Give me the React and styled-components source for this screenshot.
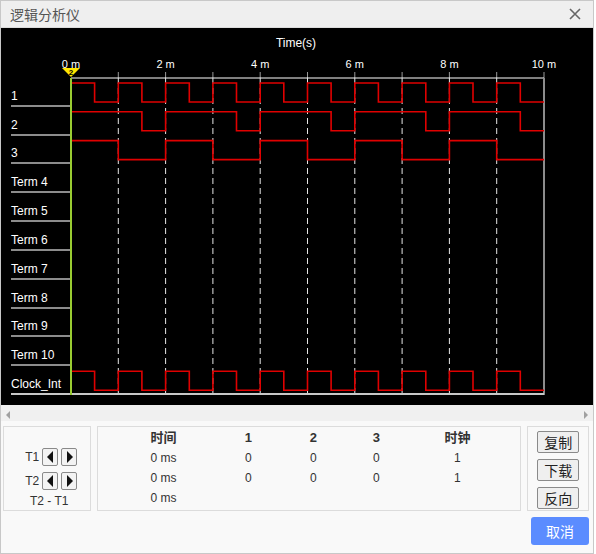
import React from "react";
import styled, { createGlobalStyle } from "styled-components";

const GlobalStyle = createGlobalStyle`
  html, body {
    margin: 0;
    padding: 0;
    background: #ffffff;
    font-family: "Liberation Sans", Arial, "Noto Sans CJK SC", sans-serif;
  }
`;

const Dialog = styled.div`
  width: 592px;
  height: 552px;
  border: 1px solid #c8c8c8;
  display: flex;
  flex-direction: column;
  background: #f9f9f9;
`;

const TitleBar = styled.div`
  height: 26px;
  display: flex;
  align-items: center;
  justify-content: space-between;
  padding: 0 10px 0 9px;
  background: #efefef;
  border-bottom: 1px solid #dcdcdc;
`;

const TitleText = styled.span`
  font-size: 14px;
  color: #555;
  font-family: "Noto Sans CJK SC", sans-serif;
`;

const CloseIcon = styled.svg`
  width: 12px;
  height: 12px;
  margin-right: 2px;
`;

const Canvas = styled.div`
  background: #000;
  height: 377px;
  display: flex;
  flex-direction: column;
`;

const TimeTitle = styled.div`
  height: 28px;
  line-height: 30px;
  text-align: center;
  color: #fff;
  font-size: 12px;
  padding-right: 2px;
`;

const PlotRow = styled.div`
  display: flex;
  flex: 1;
`;

const LabelColumn = styled.div`
  width: 60px;
  margin-left: 10px;
  padding-top: 22px;
  display: flex;
  flex-direction: column;
`;

const RowLabel = styled.div`
  height: 28.82px;
  box-sizing: border-box;
  border-bottom: 2px solid ${(p) => (p.last ? "#c8c8c8" : "#8c8c8c")};
  color: #fff;
  font-size: 12px;
  display: flex;
  align-items: flex-end;
  padding-bottom: 2px;
`;

const Plot = styled.svg`
  overflow: visible;
  display: block;
`;

const ScrollBar = styled.div`
  height: 16px;
  background: #f0f0f0;
  display: flex;
  align-items: center;
  justify-content: space-between;
  padding: 4px 5px 0 5px;
  box-sizing: border-box;
`;

const ScrollArrow = styled.span`
  width: 0;
  height: 0;
  border-top: 4px solid transparent;
  border-bottom: 4px solid transparent;
  ${(p) =>
    p.dir === "left"
      ? "border-right: 4px solid #a0a0a0;"
      : "border-left: 4px solid #a0a0a0;"}
`;

const Panel = styled.div`
  flex: 1;
  display: flex;
  flex-direction: column;
  padding: 5px 4px 0 2px;
`;

const BoxRow = styled.div`
  display: flex;
  gap: 6px;
  height: 85px;
`;

const Box = styled.div`
  width: ${(p) => p.w}px;
  box-sizing: border-box;
  border: 1px solid #dcdcdc;
  background: #f9f9f9;
`;

const CursorBox = styled(Box)`
  display: flex;
  flex-direction: column;
  align-items: center;
  padding-top: 21px;
  gap: 6px;
`;

const CursorRow = styled.div`
  display: flex;
  align-items: center;
  gap: 3px;
  font-size: 12px;
  color: #333;
  margin-left: 8px;
`;

const ArrowButton = styled.button`
  width: 16px;
  height: 18px;
  padding: 0;
  margin: 0;
  border: 1px solid #8a8a8a;
  border-radius: 2px;
  background: #f3f3f3;
  display: flex;
  align-items: center;
  justify-content: center;
`;

const Tri = styled.span`
  width: 0;
  height: 0;
  border-top: 6px solid transparent;
  border-bottom: 6px solid transparent;
  ${(p) =>
    p.dir === "left"
      ? "border-right: 6px solid #111; margin-right: 1px;"
      : "border-left: 6px solid #111; margin-left: 1px;"}
`;

const DiffLabel = styled.div`
  font-size: 12px;
  color: #333;
  margin-top: -2px;
  margin-left: 4px;
`;

const DataTable = styled(Box)`
  display: grid;
  grid-template-columns: 130px 40px 90px 36px 126px;
  grid-auto-rows: 20px;
  padding-top: 1px;
  align-content: start;
`;

const Cell = styled.div`
  text-align: center;
  line-height: 20px;
  font-size: ${(p) => (p.head ? "13px" : "12px")};
  font-weight: ${(p) => (p.head ? "bold" : "normal")};
  color: #333;
  font-family: "Liberation Sans", Arial, "Noto Sans CJK SC", sans-serif;
`;

const ActionBox = styled(Box)`
  display: flex;
  flex-direction: column;
  align-items: center;
  padding-top: 4px;
  gap: 6px;
`;

const ActionButton = styled.button`
  width: 42px;
  height: 22px;
  padding: 0;
  border: 1px solid #8a8a8a;
  border-radius: 2px;
  background: #efefef;
  color: #222;
  font-size: 14px;
  font-family: "Noto Sans CJK SC", sans-serif;
  line-height: 20px;
`;

const Footer = styled.div`
  display: flex;
  justify-content: flex-end;
  padding-top: 6px;
`;

const CancelButton = styled.button`
  width: 58px;
  height: 28px;
  border: none;
  border-radius: 3px;
  background: #5b8cff;
  color: #fff;
  font-size: 14px;
  font-family: "Noto Sans CJK SC", sans-serif;
`;

const labels = [
  "1",
  "2",
  "3",
  "Term 4",
  "Term 5",
  "Term 6",
  "Term 7",
  "Term 8",
  "Term 9",
  "Term 10",
  "Clock_Int",
];

const STEP = 47.3;
const TOP = 22;
const ROW = 28.82;
const BOTTOM = TOP + ROW * 11;

// segments: [start, end, high] in tick units
function buildPath(row, segs) {
  const hi = TOP + row * ROW + 5;
  const lo = TOP + row * ROW + 24;
  let d = "";
  segs.forEach(([a, b, h], i) => {
    const y = h ? hi : lo;
    d += `${i === 0 ? "M" : "L"}${(a * STEP).toFixed(1)},${y} L${(b * STEP).toFixed(1)},${y} `;
  });
  return d;
}

const fast = [];
const mid = [];
const slow = [];
for (let k = 0; k < 10; k++) {
  fast.push([k, k + 0.5, 1], [k + 0.5, k + 1, 0]);
  slow.push([k, k + 1, k % 2 === 0 ? 1 : 0]);
}
for (let k = 0; k < 10; k += 2) {
  mid.push([k, k + 1.5, 1], [k + 1.5, k + 2, 0]);
}

const waves = [
  buildPath(0, fast),
  buildPath(1, mid),
  buildPath(2, slow),
  buildPath(10, fast),
];

const ticks = [0, 1, 2, 3, 4, 5, 6, 7, 8, 9, 10];

const tableRows = [
  ["时间", "1", "2", "3", "时钟"],
  ["0 ms", "0", "0", "0", "1"],
  ["0 ms", "0", "0", "0", "1"],
  ["0 ms", "", "", "", ""],
];

function Chart() {
  return (
    <Plot width="522" height="349">
      {ticks.map((t) =>
        t % 2 === 0 ? (
          <text
            key={"l" + t}
            x={t * STEP}
            y="12"
            fill="#fff"
            fontSize="11"
            textAnchor="middle"
            fontFamily="Liberation Sans, Arial, sans-serif"
          >
            {t} m
          </text>
        ) : null
      )}
      {ticks.slice(1).map((t) => (
        <line
          key={"t" + t}
          x1={t * STEP}
          x2={t * STEP}
          y1="16"
          y2={TOP}
          stroke="#9a9a9a"
          strokeWidth="1"
        />
      ))}
      <line x1="0" x2={10 * STEP} y1={TOP} y2={TOP} stroke="#fff" strokeWidth="1" />
      {ticks.slice(1, 10).map((t) => (
        <line
          key={"d" + t}
          x1={t * STEP}
          x2={t * STEP}
          y1={TOP}
          y2={BOTTOM}
          stroke="#e6e6e6"
          strokeWidth="1"
          strokeDasharray="6 4"
        />
      ))}
      <line
        x1={10 * STEP}
        x2={10 * STEP}
        y1={TOP}
        y2={BOTTOM}
        stroke="#8c8c8c"
        strokeWidth="2"
      />
      <line x1="0" x2={10 * STEP} y1={BOTTOM - 1} y2={BOTTOM - 1} stroke="#c8c8c8" strokeWidth="2" />
      {waves.map((d, i) => (
        <path key={i} d={d} fill="none" stroke="#e00000" strokeWidth="1.6" />
      ))}
      <line x1="0" x2="0" y1={TOP} y2={BOTTOM} stroke="#9acd32" strokeWidth="2" />
      <polygon points="-9,12 9,12 0,21" fill="#ffe600" />
      <text
        x="0"
        y="19"
        fontSize="8"
        fontWeight="bold"
        textAnchor="middle"
        fill="#000"
        fontFamily="Liberation Sans, Arial, sans-serif"
      >
        2
      </text>
    </Plot>
  );
}

export default function App() {
  return (
    <>
      <GlobalStyle />
      <Dialog>
        <TitleBar>
          <TitleText>逻辑分析仪</TitleText>
          <CloseIcon viewBox="0 0 12 12">
            <path d="M1 1 L11 11 M11 1 L1 11" stroke="#666" strokeWidth="1.6" />
          </CloseIcon>
        </TitleBar>
        <Canvas>
          <TimeTitle>Time(s)</TimeTitle>
          <PlotRow>
            <LabelColumn>
              {labels.map((l, i) => (
                <RowLabel key={l} last={i === labels.length - 1}>
                  {l}
                </RowLabel>
              ))}
            </LabelColumn>
            <Chart />
          </PlotRow>
        </Canvas>
        <ScrollBar>
          <ScrollArrow dir="left" />
          <ScrollArrow dir="right" />
        </ScrollBar>
        <Panel>
          <BoxRow>
            <CursorBox w={89}>
              <CursorRow>
                T1
                <ArrowButton>
                  <Tri dir="left" />
                </ArrowButton>
                <ArrowButton>
                  <Tri dir="right" />
                </ArrowButton>
              </CursorRow>
              <CursorRow>
                T2
                <ArrowButton>
                  <Tri dir="left" />
                </ArrowButton>
                <ArrowButton>
                  <Tri dir="right" />
                </ArrowButton>
              </CursorRow>
              <DiffLabel>T2 - T1</DiffLabel>
            </CursorBox>
            <DataTable w={425}>
              {tableRows.map((r, ri) =>
                r.map((c, ci) => (
                  <Cell key={ri + "-" + ci} head={ri === 0}>
                    {c}
                  </Cell>
                ))
              )}
            </DataTable>
            <ActionBox w={62}>
              <ActionButton>复制</ActionButton>
              <ActionButton>下载</ActionButton>
              <ActionButton>反向</ActionButton>
            </ActionBox>
          </BoxRow>
          <Footer>
            <CancelButton>取消</CancelButton>
          </Footer>
        </Panel>
      </Dialog>
    </>
  );
}
